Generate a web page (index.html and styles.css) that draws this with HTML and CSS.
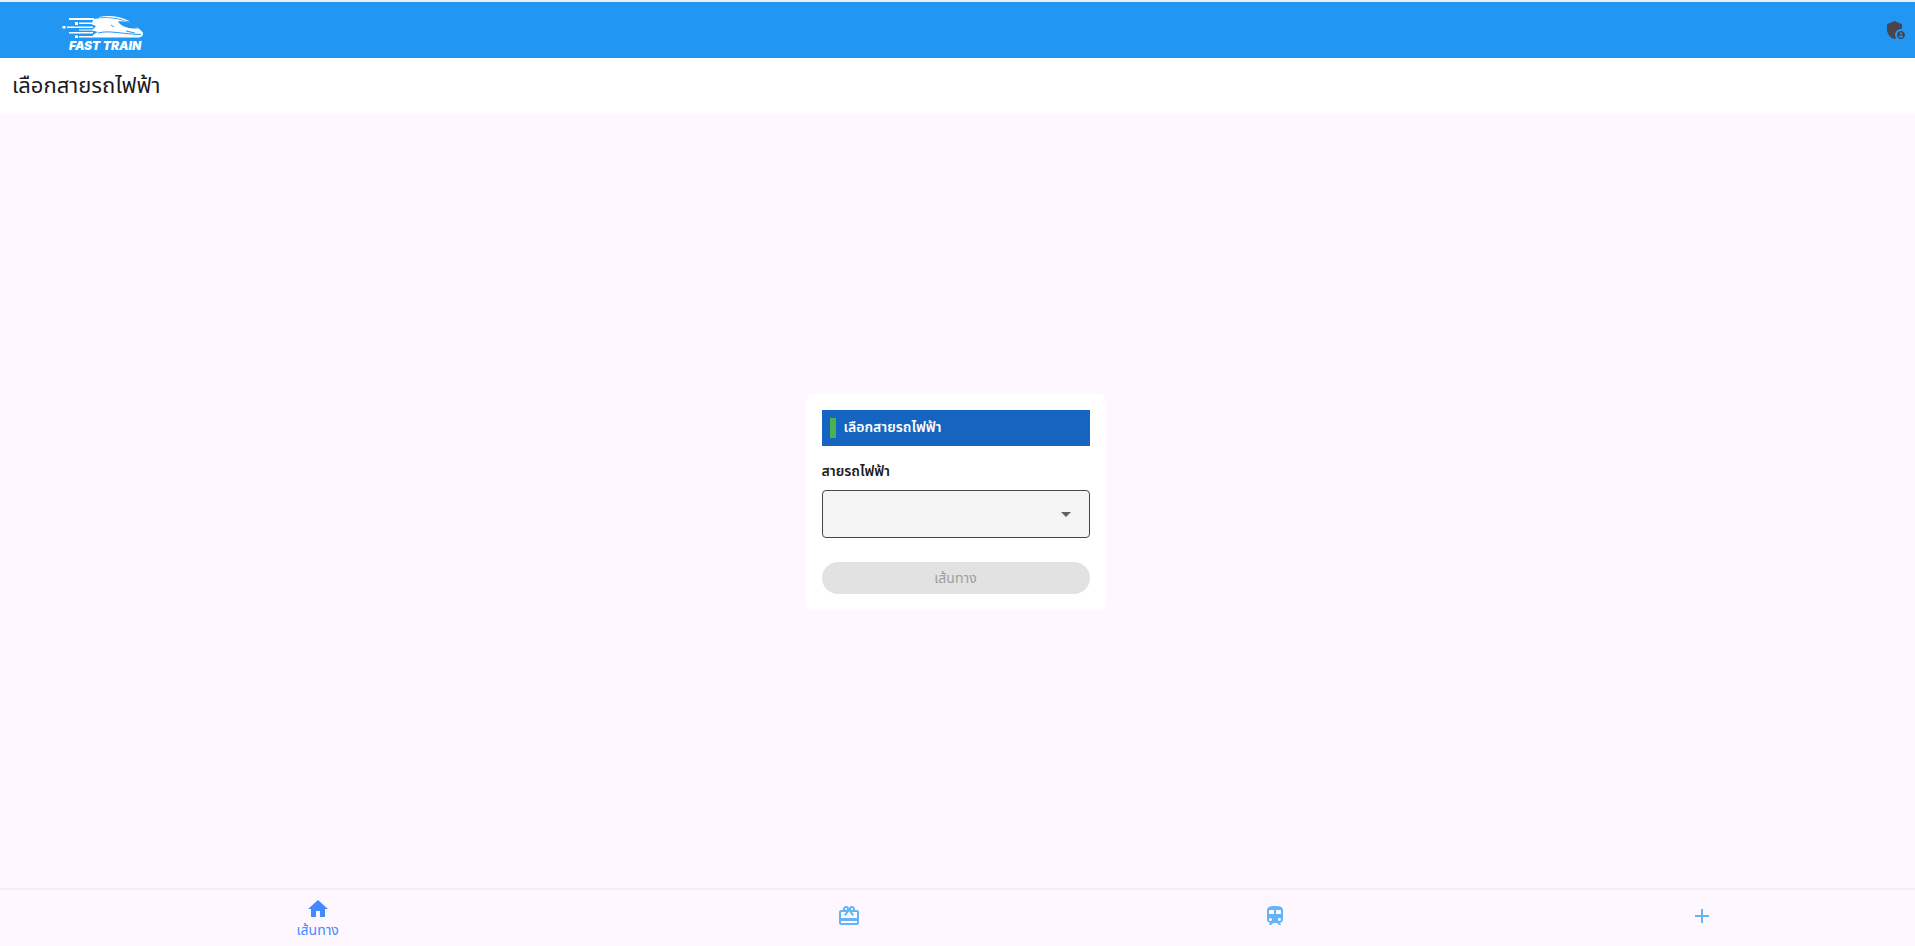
FILE: index.html
```html
<!DOCTYPE html>
<html lang="th">
<head>
<meta charset="utf-8">
<title>Fast Train</title>
<link rel="stylesheet" href="styles.css">
</head>
<body>
<header class="topbar">
  <svg class="logo" viewBox="0 0 84 44" role="img" aria-label="Fast Train">
    <g fill="#fff">
      <path d="M7 10h25v2H7zM13 14h3v3h-3zM17 14.500h16v1.500H17zM.5 18h3v2.500h-3zM5 18.500h26v1.500H5zM17 21.500h15v1H17zM7 24h24v1.500H7zM13 27.500h3v2.500h-3zM17 28h13v1.500H17z"/>
      <path d="M32 11C40 9.500 48 10 55 11C65 13 75 18 80.500 24C82 27 80 29.500 76 29.500H29C31 27 33 25 36 24L30 22.500L34 18L29 16Z"/>
      <path d="M37 9C47 7 58 8 68 13.500L64 13C55 9 47 9 37 9.500Z"/>
    </g>
    <path d="M56 13.500C64 12.500 72 16 76 20.500C69 21 59 19 56 13.500Z" fill="#2196f3"/>
    <path d="M36 25C48 22 58 26 79 26.500M49 17L52 19M64 23L73 25" fill="none" stroke="#2196f3"/>
    <text class="logo-text" x="7" y="42">FAST TRAIN</text>
  </svg>
  <button class="icon-button" aria-label="Admin">
    <svg class="icon" viewBox="0 0 24 24"><path d="M17 11c.34 0 .67.04 1 .09V6.27L10.5 3 3 6.27v4.91c0 4.54 3.2 8.79 7.5 9.82.55-.13 1.08-.32 1.6-.55-.69-.98-1.1-2.17-1.1-3.45 0-3.31 2.69-6 6-6z"/><path d="M17 13c-2.21 0-4 1.79-4 4s1.79 4 4 4 4-1.79 4-4-1.79-4-4-4zm0 1.38c.62 0 1.12.51 1.12 1.12s-.51 1.12-1.12 1.12-1.12-.51-1.12-1.12.5-1.12 1.12-1.12zm0 5.37c-.93 0-1.74-.46-2.24-1.17.05-.72 1.51-1.08 2.24-1.08s2.19.36 2.24 1.08c-.5.71-1.31 1.17-2.24 1.17z"/></svg>
  </button>
</header>
<h1 class="page-title">เลือกสายรถไฟฟ้า</h1>
<main class="content">
  <form class="card">
    <h2 class="card-title">เลือกสายรถไฟฟ้า</h2>
    <label class="label" for="line">สายรถไฟฟ้า</label>
    <div class="select-box">
      <select class="select" id="line"><option></option></select>
      <svg class="arrow" viewBox="0 0 24 24"><path d="M7 10l5 5 5-5z"/></svg>
    </div>
    <button class="submit" type="button" disabled>เส้นทาง</button>
  </form>
</main>
<nav class="nav">
  <a class="nav-item nav-active" href="#"><svg class="icon" viewBox="0 0 24 24"><path d="M10 20v-6h4v6h5v-8h3L12 3 2 12h3v8z"/></svg><span>เส้นทาง</span></a>
  <a class="nav-item" href="#" aria-label="Cards"><svg class="icon" viewBox="0 0 24 24"><path d="M20 6h-2.18c.11-.31.18-.65.18-1 0-1.66-1.34-3-3-3-1.05 0-1.96.54-2.5 1.35l-.5.67-.5-.68C10.96 2.54 10.05 2 9 2 7.34 2 6 3.34 6 5c0 .35.07.69.18 1H4c-1.11 0-1.99.89-1.99 2L2 19c0 1.11.89 2 2 2h16c1.11 0 2-.89 2-2V8c0-1.11-.89-2-2-2zm-5-2c.55 0 1 .45 1 1s-.45 1-1 1-1-.45-1-1 .45-1 1-1zM9 4c.55 0 1 .45 1 1s-.45 1-1 1-1-.45-1-1 .45-1 1-1zm11 15H4v-2h16v2zm0-5H4V8h5.080L7 10.830 8.620 12 11 8.760l1-1.360 1 1.360L15.380 12 17 10.830 14.920 8H20v6z"/></svg></a>
  <a class="nav-item" href="#" aria-label="Train"><svg class="icon" viewBox="0 0 24 24"><path d="M12 2c-4 0-8 .5-8 4v9.500C4 17.430 5.570 19 7.500 19L6 20.500v.5h2.230l2-2H14l2 2h2v-.5L16.500 19c1.930 0 3.500-1.570 3.500-3.500V6c0-3.500-3.580-4-8-4zM7.500 17c-.83 0-1.500-.67-1.500-1.500S6.670 14 7.500 14s1.500.67 1.500 1.500S8.330 17 7.500 17zm3.500-7H6V6h5v4zm2 0V6h5v4h-5zm3.500 7c-.83 0-1.500-.67-1.500-1.500s.67-1.500 1.500-1.500 1.500.67 1.500 1.500-.67 1.500-1.500 1.500z"/></svg></a>
  <a class="nav-item" href="#" aria-label="Add"><svg class="icon" viewBox="0 0 24 24"><path d="M19 13h-6v6h-2v-6H5v-2h6V5h2v6h6v2z"/></svg></a>
</nav>
</body>
</html>
```
FILE: styles.css
```css
* { box-sizing: border-box; }
body {
  margin: 0;
  min-height: 100vh;
  display: flex;
  flex-direction: column;
  background: #fef7ff;
  color: #1d1b20;
  font-family: "Noto Sans Thai", "Noto Sans", sans-serif;
  font-size: 14px;
}
button, select { font: inherit; }
.icon { width: 24px; height: 24px; fill: currentColor; }
.topbar {
  display: flex;
  align-items: center;
  justify-content: space-between;
  height: 58px;
  padding: 0 7px 0 62px;
  border-top: 2px solid #e8f1f8;
  background: #2196f3;
}
.logo { width: 84px; height: 44px; overflow: visible; }
.logo-text { font: italic 900 12px Inter, sans-serif; fill: #fff; }
.icon-button { display: flex; padding: 0; border: 0; background: none; color: #49454f; }
.page-title {
  margin: 0;
  padding: 2px 12px 0;
  background: #fff;
  font-size: 22px;
  font-weight: 400;
  line-height: 54px;
}
.content {
  flex: 1;
  display: flex;
  align-items: center;
  justify-content: center;
  padding: 2px 4px 0 0;
}
.card {
  display: flex;
  flex-direction: column;
  width: 300px;
  padding: 16px;
  border-radius: 8px;
  background: #fff;
}
.card-title {
  display: flex;
  align-items: center;
  gap: 8px;
  margin: 0 0 16px;
  padding: 8px;
  background: #1565c0;
  color: #fff;
  font-size: 14px;
  font-weight: 600;
  line-height: 20px;
}
.card-title::before { content: ""; width: 6px; height: 20px; background: #4caf50; }
.label { margin-bottom: 8px; font-weight: 600; line-height: 20px; }
.select-box { display: grid; align-items: center; margin-bottom: 24px; }
.select {
  grid-area: 1 / 1;
  height: 48px;
  padding: 0 12px;
  appearance: none;
  border: 1px solid #49454f;
  border-radius: 4px;
  background: #f5f5f5;
}
.arrow { grid-area: 1 / 1; justify-self: end; width: 24px; height: 24px; margin-right: 12px; fill: #616161; pointer-events: none; }
.submit { height: 32px; padding: 0; border: 0; border-radius: 16px; background: #e2e2e2; color: #9e9e9e; }
.nav { display: flex; height: 58px; border-top: 2px solid #f5eef6; }
.nav-item {
  flex: 1;
  display: flex;
  flex-direction: column;
  align-items: center;
  justify-content: center;
  padding-bottom: 4px;
  color: #64b5f6;
  text-decoration: none;
  line-height: 20px;
}
.nav-active { flex: 1.49; padding: 2px 0 0; color: #448aff; }
```
